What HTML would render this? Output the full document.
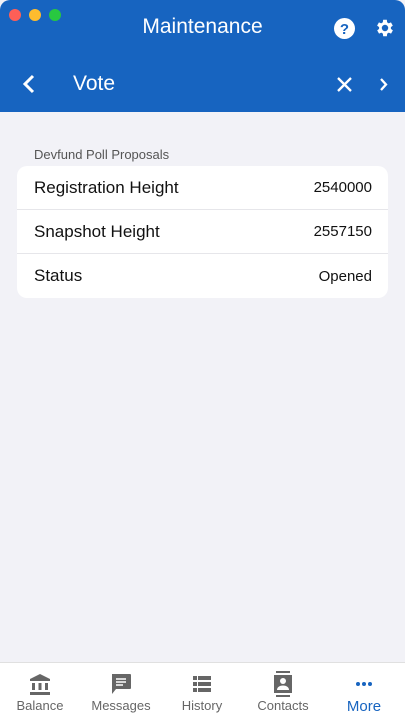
<!DOCTYPE html>
<html><head><style>
body{margin:0;width:405px;height:720px;background:#f2f2f7;font-family:"Liberation Sans",sans-serif;position:relative;overflow:hidden}
.top{position:absolute;left:0;top:0;width:405px;height:112px;background:#1764c0;border-radius:10px 10px 0 0;color:#fff}
.dot{position:absolute;top:9px;width:12px;height:12px;border-radius:50%}
.t1{position:absolute;top:15px;left:0;width:405px;text-align:center;font-size:21px}
.t2{position:absolute;top:72px;left:73px;font-size:21px}
.card{position:absolute;left:17px;top:166px;width:371px;height:132px;background:#fff;border-radius:10px}
.row{height:44px;display:flex;justify-content:space-between;align-items:center;padding:0 16px 0 17px;border-bottom:1px solid #e6e6ea;box-sizing:border-box}
.row:last-child{border:none}
.l{font-size:17px;color:#111}.r{font-size:15px;color:#111}
.tab{position:absolute;top:662px;left:0;width:405px;height:58px;background:#fff;border-top:1px solid #e0e0e0}
.it{position:absolute;top:0;width:80px;text-align:center;font-size:13px;color:#666}
.it svg{display:block;margin:10px auto 3px}
</style></head><body>
<div class="top">
<div class="dot" style="left:9px;background:#fe5f57"></div>
<div class="dot" style="left:29px;background:#febc2e"></div>
<div class="dot" style="left:49px;background:#28c840"></div>
<div class="t1">Maintenance</div>
<svg style="position:absolute;left:334px;top:18px" width="21" height="21" viewBox="0 0 21 21"><circle cx="10.5" cy="10.5" r="10.5" fill="#fff"/><text x="10.5" y="16" text-anchor="middle" font-size="15" font-weight="bold" fill="#1764c0" font-family="Liberation Sans">?</text></svg>
<svg style="position:absolute;left:374px;top:17px" width="22" height="22" viewBox="0 0 24 24"><path fill="#fff" d="M19.4 13a7.5 7.5 0 000-2l2.1-1.6-2-3.5-2.5 1a7.3 7.3 0 00-1.7-1L15 3h-4l-.4 2.9a7.3 7.3 0 00-1.7 1l-2.5-1-2 3.5L6.6 11a7.5 7.5 0 000 2l-2.1 1.6 2 3.5 2.5-1a7.3 7.3 0 001.7 1L11 21h4l.4-2.9a7.3 7.3 0 001.7-1l2.5 1 2-3.5zM13 15.5a3.5 3.5 0 110-7 3.5 3.5 0 010 7z" transform="translate(-1 0)"/></svg>
<svg style="position:absolute;left:22px;top:74px" width="14" height="20" viewBox="0 0 14 20"><path d="M11 2 3 10l8 8" stroke="#fff" stroke-width="3" fill="none"/></svg>
<div class="t2">Vote</div>
<svg style="position:absolute;left:337px;top:77px" width="15" height="15"><path d="M1 1l13 13M14 1 1 14" stroke="#fff" stroke-width="2.3"/></svg>
<svg style="position:absolute;left:379px;top:78px" width="10" height="13"><path d="M2 1l5 5.5L2 12" stroke="#fff" stroke-width="2.3" fill="none"/></svg>
</div>
<div style="position:absolute;left:34px;top:147px;font-size:13px;color:#555">Devfund Poll Proposals</div>
<div class="card">
<div class="row"><span class="l">Registration Height</span><span class="r">2540000</span></div>
<div class="row"><span class="l">Snapshot Height</span><span class="r">2557150</span></div>
<div class="row"><span class="l">Status</span><span class="r">Opened</span></div>
</div>
<div class="tab">
<div class="it" style="left:0"><svg width="24" height="22"><path fill="#666" d="M12 1 2 6v2h20V6zM4 10h3v7H4zm6.5 0h3v7h-3zm6.5 0h3v7h-3zM2 19h20v3H2z"/></svg>Balance</div>
<div class="it" style="left:81px"><svg width="24" height="22"><path fill="#666" d="M3 1h18a1 1 0 011 1v13a1 1 0 01-1 1H7l-4 5z"/><path stroke="#fff" stroke-width="1.6" d="M7 6h10M7 9h10M7 12h7"/></svg>Messages</div>
<div class="it" style="left:162px"><svg width="24" height="22"><path fill="#666" d="M3 3h4v4H3zm5 0h13v4H8zM3 9h4v4H3zm5 0h13v4H8zM3 15h4v4H3zm5 0h13v4H8z"/></svg>History</div>
<div class="it" style="left:243px"><svg width="24" height="26" style="margin-top:8px;margin-bottom:1px"><path fill="#666" d="M5 0h14v2H5zM5 24h14v2H5zM3 4h18v18H3z"/><circle cx="12" cy="10" r="3" fill="#fff"/><path fill="#fff" d="M6 19c0-3 3-4.5 6-4.5s6 1.5 6 4.5z"/></svg>Contacts</div>
<div class="it" style="left:324px;color:#1764c0;font-size:15px"><svg width="24" height="22"><circle cx="6" cy="11" r="2" fill="#1764c0"/><circle cx="12" cy="11" r="2" fill="#1764c0"/><circle cx="18" cy="11" r="2" fill="#1764c0"/></svg>More</div>
</div>
</body></html>
